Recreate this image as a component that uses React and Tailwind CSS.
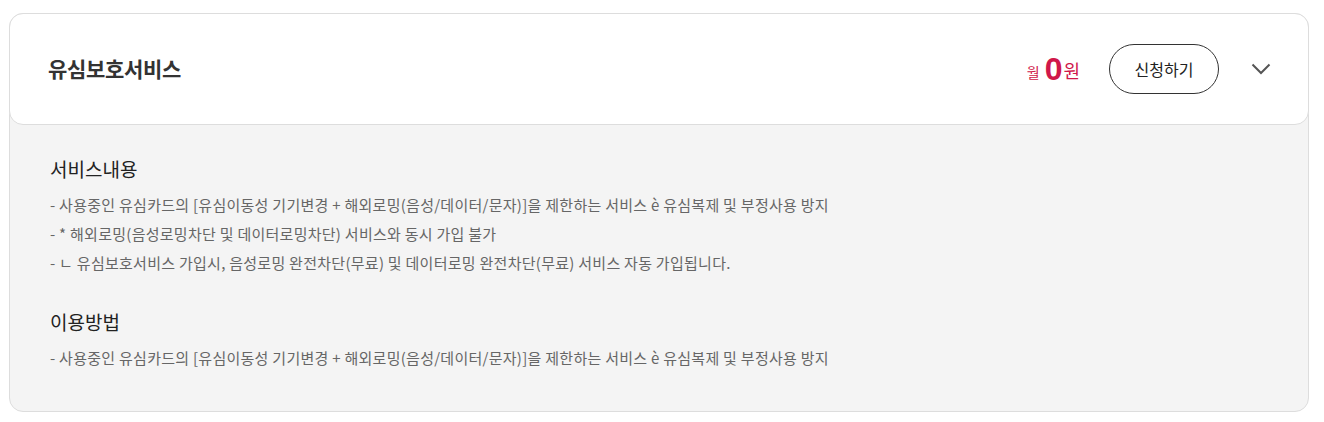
import React, { useState } from 'react';

const font = { fontFamily: '"Noto Sans CJK KR", "Noto Sans", sans-serif' };

const serviceLines = [
  '- 사용중인 유심카드의 [유심이동성 기기변경 + 해외로밍(음성/데이터/문자)]을 제한하는 서비스 è 유심복제 및 부정사용 방지',
  '- * 해외로밍(음성로밍차단 및 데이터로밍차단) 서비스와 동시 가입 불가',
  '- ㄴ 유심보호서비스 가입시, 음성로밍 완전차단(무료) 및 데이터로밍 완전차단(무료) 서비스 자동 가입됩니다.',
];

const usageLines = [
  '- 사용중인 유심카드의 [유심이동성 기기변경 + 해외로밍(음성/데이터/문자)]을 제한하는 서비스 è 유심복제 및 부정사용 방지',
];

function Section({ title, lines }) {
  return (
    <div>
      <h3 className="text-[19px] leading-[26px] text-[#222]">{title}</h3>
      <ul className="mt-[8px]">
        {lines.map((line, i) => (
          <li key={i} className="text-[15px] leading-[29px] tracking-[0.27px] text-[#666]">
            {line}
          </li>
        ))}
      </ul>
    </div>
  );
}

export default function App() {
  const [open, setOpen] = useState(true);

  return (
    <div className="bg-white min-h-[422px] pt-[13px] pl-[9px]" style={font}>
      <div className="w-[1300px] rounded-[14px] border border-[#dddddd] bg-[#f4f4f4]">
        {/* header */}
        <div className="-m-px flex h-[112px] items-center rounded-[14px] border border-[#dddddd] bg-white pl-[38px] pr-[37px]">
          <h2 className="text-[21px] font-bold tracking-[-0.3px] text-[#333]">유심보호서비스</h2>
          <div className="ml-auto flex items-center text-[#d0174a]">
            <span className="text-[14px] mt-[6px]">월</span>
            <span className="ml-[5px] text-[32px] font-bold leading-none" style={{ fontFamily: '"Liberation Sans", Arial, sans-serif' }}>0</span>
            <span className="ml-[1px] text-[18px] mt-[3px]">원</span>
          </div>
          <button className="ml-[29px] h-[50px] w-[110px] shrink-0 rounded-full border border-[#333] text-[16px] text-[#222]">
            신청하기
          </button>
          <button onClick={() => setOpen(!open)} className="ml-[32px] flex h-[20px] w-[20px] items-center justify-center">
            <svg width="20" height="12" viewBox="0 0 20 12" fill="none">
              <path d={open ? 'M1.5 1.5 L10 10 L18.5 1.5' : 'M1.5 10.5 L10 2 L18.5 10.5'} stroke="#555" strokeWidth="2" />
            </svg>
          </button>
        </div>

        {/* body */}
        {open && (
          <div className="flex flex-col gap-[32px] px-[40px] pt-[32px] pb-[39px]">
            <Section title="서비스내용" lines={serviceLines} />
            <Section title="이용방법" lines={usageLines} />
          </div>
        )}
      </div>
    </div>
  );
}
